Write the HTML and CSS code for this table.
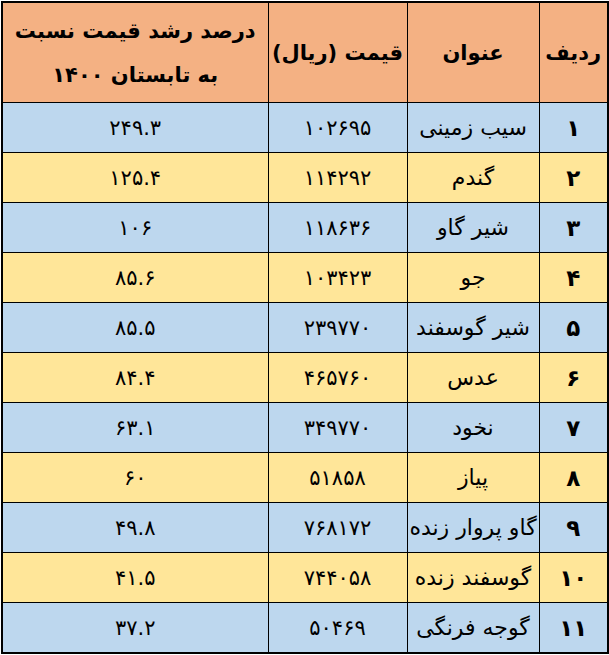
FILE: index.html
```html
<!DOCTYPE html>
<html lang="fa" dir="rtl">
<head>
<meta charset="utf-8">
<link rel="stylesheet" href="styles.css">
</head>
<body>
<table class="price-table">
  <colgroup>
    <col class="c-idx">
    <col class="c-name">
    <col class="c-price">
    <col class="c-growth">
  </colgroup>
  <thead>
    <tr>
      <th>ردیف</th>
      <th>عنوان</th>
      <th>قیمت (ریال)</th>
      <th>درصد رشد قیمت نسبت<br>به تابستان ۱۴۰۰</th>
    </tr>
  </thead>
  <tbody>
    <tr class="blue"><td class="idx">۱</td><td class="name">سیب زمینی</td><td>۱۰۲۶۹۵</td><td>۲۴۹.۳</td></tr>
    <tr class="yellow"><td class="idx">۲</td><td class="name">گندم</td><td>۱۱۴۲۹۲</td><td>۱۲۵.۴</td></tr>
    <tr class="blue"><td class="idx">۳</td><td class="name">شیر گاو</td><td>۱۱۸۶۳۶</td><td>۱۰۶</td></tr>
    <tr class="yellow"><td class="idx">۴</td><td class="name">جو</td><td>۱۰۳۴۲۳</td><td>۸۵.۶</td></tr>
    <tr class="blue"><td class="idx">۵</td><td class="name">شیر گوسفند</td><td>۲۳۹۷۷۰</td><td>۸۵.۵</td></tr>
    <tr class="yellow"><td class="idx">۶</td><td class="name">عدس</td><td>۴۶۵۷۶۰</td><td>۸۴.۴</td></tr>
    <tr class="blue"><td class="idx">۷</td><td class="name">نخود</td><td>۳۴۹۷۷۰</td><td>۶۳.۱</td></tr>
    <tr class="yellow"><td class="idx">۸</td><td class="name">پیاز</td><td>۵۱۸۵۸</td><td>۶۰</td></tr>
    <tr class="blue"><td class="idx">۹</td><td class="name">گاو پروار زنده</td><td>۷۶۸۱۷۲</td><td>۴۹.۸</td></tr>
    <tr class="yellow"><td class="idx">۱۰</td><td class="name">گوسفند زنده</td><td>۷۴۴۰۵۸</td><td>۴۱.۵</td></tr>
    <tr class="blue"><td class="idx">۱۱</td><td class="name">گوجه فرنگی</td><td>۵۰۴۶۹</td><td>۳۷.۲</td></tr>
  </tbody>
</table>
</body>
</html>
```

FILE: styles.css
```css
html, body {
  margin: 0;
  padding: 0;
  background: #ffffff;
}

body {
  padding: 1px 0 0 1px;
  font-family: "DejaVu Sans", sans-serif;
  color: #000000;
}

.price-table {
  border-collapse: collapse;
  width: 606px;
  table-layout: fixed;
  border: 2px solid #000;
}

.c-idx { width: 69px; }
.c-name { width: 132px; }
.c-price { width: 139px; }
.c-growth { width: 266px; }

.price-table th,
.price-table td {
  border: 1px solid #000;
  text-align: center;
  vertical-align: middle;
  padding: 0;
  overflow: hidden;
  white-space: nowrap;
}

.price-table th {
  background: #f4b183;
  height: 99px;
  font-size: 21px;
  font-weight: bold;
  line-height: 44px;
}

.price-table td {
  height: 49px;
  font-size: 21px;
  line-height: 24px;
}

.price-table td.name {
  font-size: 22px;
}

.price-table td.idx {
  font-weight: bold;
  font-size: 23px;
}

.blue td { background: #bdd7ee; }
.yellow td { background: #ffe699; }
```
